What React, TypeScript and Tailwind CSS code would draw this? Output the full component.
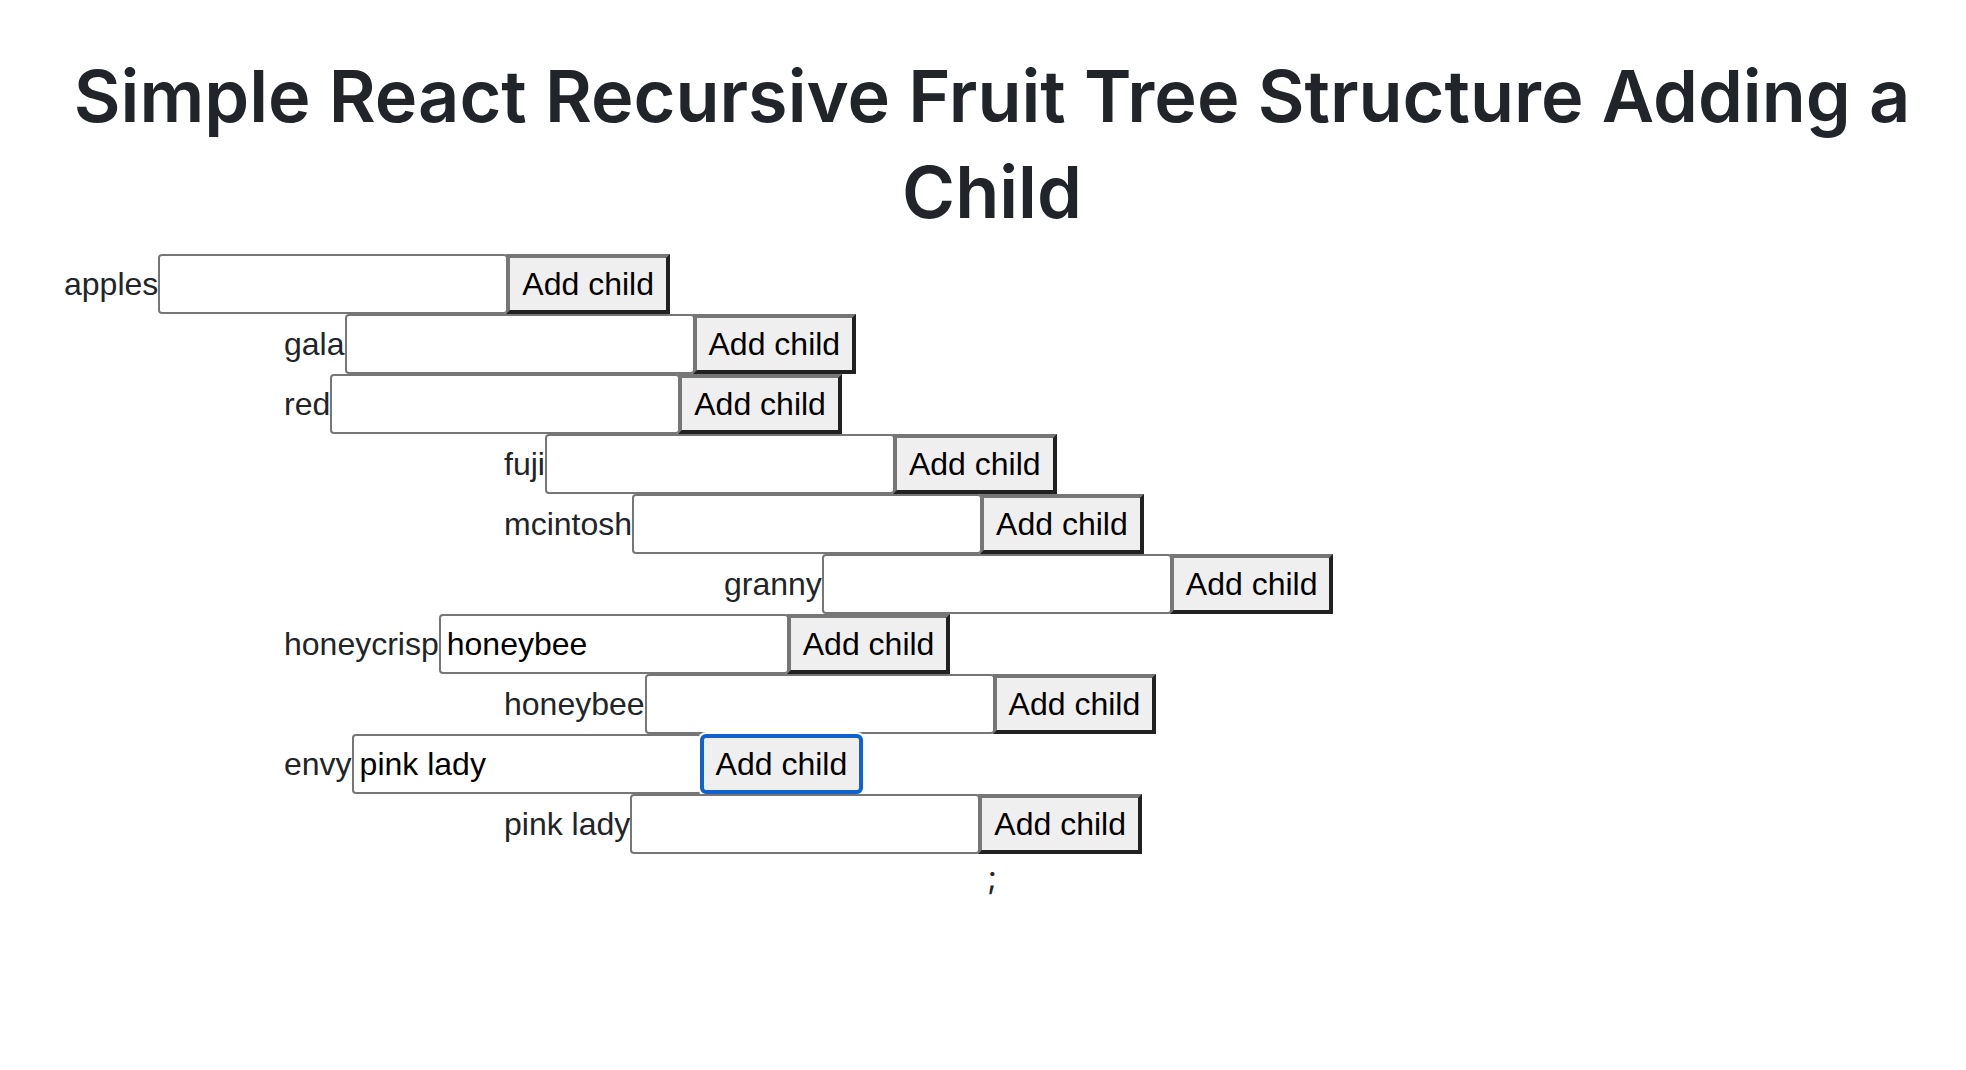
import { useId, useState } from "react";

type Fruit = {
  name: string;
  draft?: string;
  focused?: boolean;
  children?: Fruit[];
};

const initialTree: Fruit = {
  name: "apples",
  children: [
    { name: "gala" },
    {
      name: "red",
      children: [
        { name: "fuji" },
        { name: "mcintosh", children: [{ name: "granny" }] },
      ],
    },
    { name: "honeycrisp", draft: "honeybee", children: [{ name: "honeybee" }] },
    {
      name: "envy",
      draft: "pink lady",
      focused: true,
      children: [{ name: "pink lady" }],
    },
  ],
};

function FruitNode({ fruit }: { fruit: Fruit }) {
  const id = useId();
  const [draft, setDraft] = useState(fruit.draft ?? "");
  const [children, setChildren] = useState<Fruit[]>(fruit.children ?? []);

  return (
    <li>
      <div className="flex items-stretch">
        <label htmlFor={id} className="py-1.5 text-[#212529]">
          {fruit.name}
        </label>
        <input
          id={id}
          type="text"
          value={draft}
          onChange={(e) => setDraft(e.target.value)}
          className="-mr-0.5 w-[350px] rounded-[4px] border-2 border-[#767676] bg-white px-1.5 py-1 text-black"
        />
        <button
          type="button"
          autoFocus={fruit.focused}
          onClick={() => setChildren([...children, { name: draft }])}
          className="border-4 border-t-[#767676] border-r-[#212121] border-b-[#212121] border-l-[#767676] bg-[#efefef] px-3 py-0.5 text-black focus:rounded-[6px] focus:border-[#1062d0] focus:shadow-[0_0_0_2px_#fff] focus:outline-none"
        >
          Add child
        </button>
      </div>
      {children.length > 0 && (
        <ul className="pl-[220px]">
          {children.map((child, i) => (
            <FruitNode key={i} fruit={child} />
          ))}
        </ul>
      )}
    </li>
  );
}

export default function App() {
  return (
    <main className="min-h-screen bg-white pt-12 pr-[46px] pl-16 font-['Liberation_Sans',Arial,sans-serif] text-[32px] leading-[48px]">
      <h1 className="mb-3.5 text-center font-['Inter',sans-serif] text-[72px] leading-[96px] font-semibold text-[#212529]">
        Simple React Recursive Fruit Tree Structure Adding a Child
      </h1>
      <ul>
        <FruitNode fruit={initialTree} />
      </ul>
      <p className="text-center font-['Inter',sans-serif] text-[#212529]">;</p>
    </main>
  );
}
